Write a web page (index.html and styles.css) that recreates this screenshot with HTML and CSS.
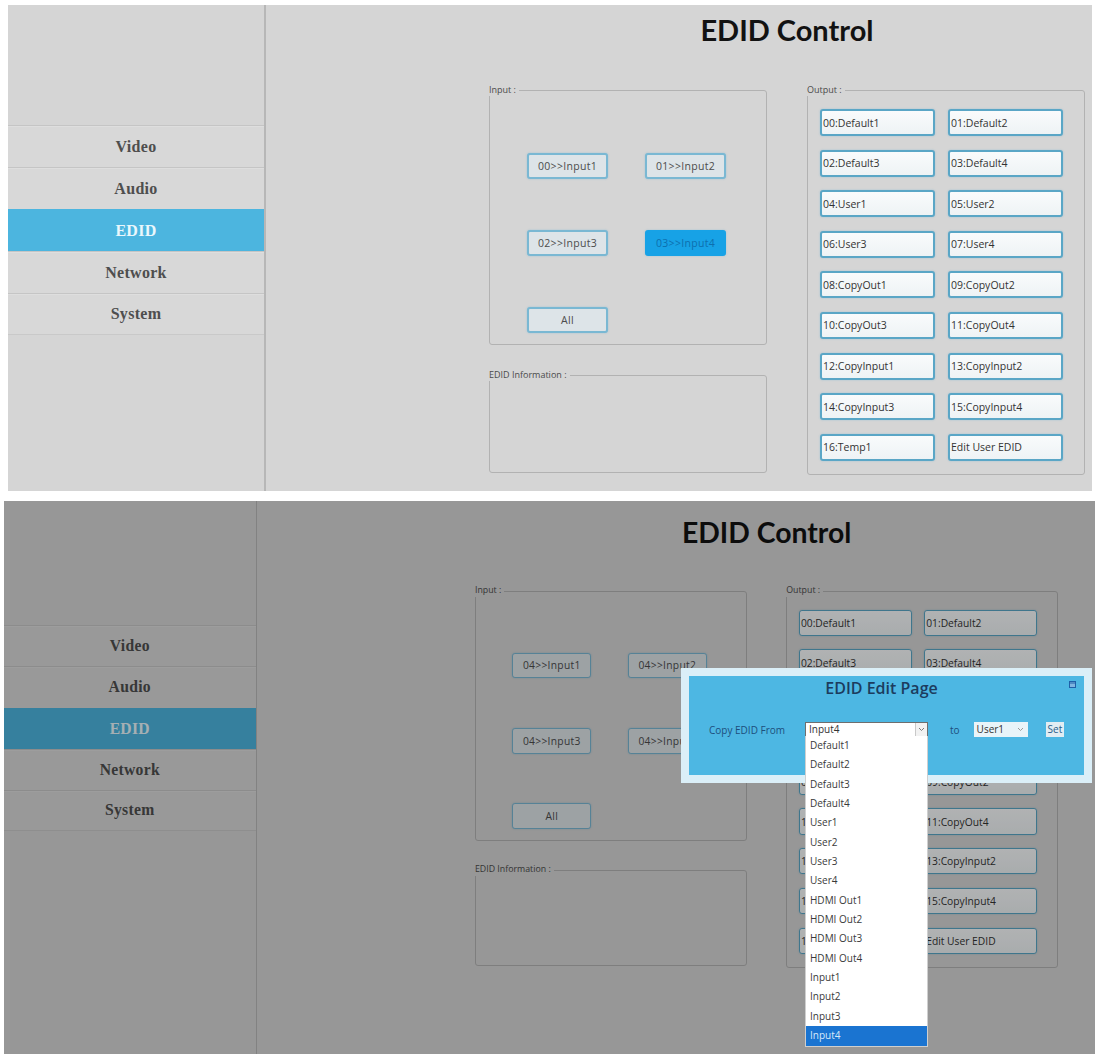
FILE: index.html
```html
<!DOCTYPE html>
<html lang="en">
<head>
<meta charset="utf-8">
<title>EDID Control</title>
<link rel="stylesheet" href="styles.css">
</head>
<body>
<div class="shot shot--top">
  <div class="screen">
    <nav class="sidebar">
      <div class="nav-item">Video</div>
      <div class="nav-item">Audio</div>
      <div class="nav-item is-active">EDID</div>
      <div class="nav-item">Network</div>
      <div class="nav-item">System</div>
    </nav>
    <main class="main">
      <div class="content">
        <h1 class="title">EDID Control</h1>
        <div class="panels">
          <div class="col-left">
            <fieldset class="group">
              <legend>Input :</legend>
              <div class="input-body">
                <div class="btn btn--in">00&gt;&gt;Input1</div>
                <div class="btn btn--in">01&gt;&gt;Input2</div>
                <div class="btn btn--in">02&gt;&gt;Input3</div>
                <div class="btn btn--in is-selected">03&gt;&gt;Input4</div>
                <div class="btn btn--in">All</div>
              </div>
            </fieldset>
            <fieldset class="group">
              <legend>EDID Information :</legend>
              <div class="info-body"></div>
            </fieldset>
          </div>
          <fieldset class="group">
            <legend>Output :</legend>
            <div class="output-body">
              <div class="btn btn--out">00:Default1</div>
              <div class="btn btn--out">01:Default2</div>
              <div class="btn btn--out">02:Default3</div>
              <div class="btn btn--out">03:Default4</div>
              <div class="btn btn--out">04:User1</div>
              <div class="btn btn--out">05:User2</div>
              <div class="btn btn--out">06:User3</div>
              <div class="btn btn--out">07:User4</div>
              <div class="btn btn--out">08:CopyOut1</div>
              <div class="btn btn--out">09:CopyOut2</div>
              <div class="btn btn--out">10:CopyOut3</div>
              <div class="btn btn--out">11:CopyOut4</div>
              <div class="btn btn--out">12:CopyInput1</div>
              <div class="btn btn--out">13:CopyInput2</div>
              <div class="btn btn--out">14:CopyInput3</div>
              <div class="btn btn--out">15:CopyInput4</div>
              <div class="btn btn--out">16:Temp1</div>
              <div class="btn btn--out">Edit User EDID</div>
            </div>
          </fieldset>
        </div>
      </div>
    </main>
  </div>
</div>

<div class="shot shot--modal">
  <div class="screen screen--small">
    <nav class="sidebar">
      <div class="nav-item">Video</div>
      <div class="nav-item">Audio</div>
      <div class="nav-item is-active">EDID</div>
      <div class="nav-item">Network</div>
      <div class="nav-item">System</div>
    </nav>
    <main class="main">
      <div class="content">
        <h1 class="title">EDID Control</h1>
        <div class="panels">
          <div class="col-left">
            <fieldset class="group">
              <legend>Input :</legend>
              <div class="input-body">
                <div class="btn btn--in">04&gt;&gt;Input1</div>
                <div class="btn btn--in">04&gt;&gt;Input2</div>
                <div class="btn btn--in">04&gt;&gt;Input3</div>
                <div class="btn btn--in">04&gt;&gt;Input4</div>
                <div class="btn btn--in">All</div>
              </div>
            </fieldset>
            <fieldset class="group">
              <legend>EDID Information :</legend>
              <div class="info-body"></div>
            </fieldset>
          </div>
          <fieldset class="group">
            <legend>Output :</legend>
            <div class="output-body">
              <div class="btn btn--out">00:Default1</div>
              <div class="btn btn--out">01:Default2</div>
              <div class="btn btn--out">02:Default3</div>
              <div class="btn btn--out">03:Default4</div>
              <div class="btn btn--out">04:User1</div>
              <div class="btn btn--out">05:User2</div>
              <div class="btn btn--out">06:User3</div>
              <div class="btn btn--out">07:User4</div>
              <div class="btn btn--out">08:CopyOut1</div>
              <div class="btn btn--out">09:CopyOut2</div>
              <div class="btn btn--out">10:CopyOut3</div>
              <div class="btn btn--out">11:CopyOut4</div>
              <div class="btn btn--out">12:CopyInput1</div>
              <div class="btn btn--out">13:CopyInput2</div>
              <div class="btn btn--out">14:CopyInput3</div>
              <div class="btn btn--out">15:CopyInput4</div>
              <div class="btn btn--out">16:Temp1</div>
              <div class="btn btn--out">Edit User EDID</div>
            </div>
          </fieldset>
        </div>
      </div>
    </main>
  </div>
  <div class="dim"></div>
  <div class="modal">
    <div class="modal-title">EDID Edit Page</div>
    <svg class="modal-close" width="7" height="7" viewBox="0 0 7 7"><rect x="0.5" y="0.5" width="6" height="6" fill="#7fb4e0" stroke="#1f5fa8" stroke-width="1"/><line x1="1" y1="2" x2="6" y2="2" stroke="#1f5fa8" stroke-width="1"/></svg>
    <div class="modal-row">
      <span class="modal-label">Copy EDID From</span>
      <div class="select select--from">
        <span class="select-value">Input4</span>
        <span class="select-arrow"><svg width="7" height="5" viewBox="0 0 7 5"><path d="M1 1 L3.5 3.5 L6 1" fill="none" stroke="#7a7a7a" stroke-width="1"/></svg></span>
        <ul class="dropdown">
          <li>Default1</li>
          <li>Default2</li>
          <li>Default3</li>
          <li>Default4</li>
          <li>User1</li>
          <li>User2</li>
          <li>User3</li>
          <li>User4</li>
          <li>HDMI Out1</li>
          <li>HDMI Out2</li>
          <li>HDMI Out3</li>
          <li>HDMI Out4</li>
          <li>Input1</li>
          <li>Input2</li>
          <li>Input3</li>
          <li class="is-selected">Input4</li>
        </ul>
      </div>
      <span class="modal-to">to</span>
      <div class="select select--to">
        <span class="select-value">User1</span>
        <span class="select-arrow select-arrow--plain"><svg width="7" height="5" viewBox="0 0 7 5"><path d="M1 1 L3.5 3.5 L6 1" fill="none" stroke="#9a9a9a" stroke-width="1"/></svg></span>
      </div>
      <span class="set-btn">Set</span>
    </div>
  </div>
</div>
</body>
</html>
```

FILE: styles.css
```css
* {
  box-sizing: border-box;
}

html,
body {
  margin: 0;
  padding: 0;
  overflow: hidden;
  background: #ffffff;
}

body {
  width: 1098px;
  height: 1054px;
  font-family: "Open Sans", "Noto Sans", sans-serif;
}

/* ---------- shots ---------- */
.shot--top {
  margin: 5px 0 0 8px;
  width: 1084px;
  height: 486px;
}

.shot--modal {
  position: relative;
  margin: 10px 0 0 4px;
  width: 1091px;
  height: 553px;
  overflow: hidden;
}

/* ---------- screen ---------- */
.screen {
  display: flex;
  width: 1084px;
  height: 486px;
  background: #d5d5d5;
}

.screen--small {
  zoom: 0.979;
  width: 1115px;
  height: 566px;
  --shift: 7px;
}

.sidebar {
  flex: none;
  width: 258px;
  border-right: 2px solid #b7b7b7;
  padding-top: calc(120px + var(--shift, 0px));
}

.nav-item {
  height: 42px;
  display: flex;
  align-items: center;
  justify-content: center;
  font-family: "Liberation Serif", "Times New Roman", serif;
  font-weight: bold;
  font-size: 16px;
  letter-spacing: 0.3px;
  color: #4e4e4e;
  background: #d8d8d8;
  border-top: 1px solid #c5c5c5;
  box-shadow: inset 0 1px 0 #dedede;
}

.nav-item:last-child {
  border-bottom: 1px solid #c9c9c9;
}

.nav-item.is-active {
  background: #4cb5df;
  color: #eaf7fc;
  border-top-color: #4cb5df;
  box-shadow: none;
}

.main {
  flex: 1;
  padding-left: 223px;
  padding-top: calc(7px + var(--shift, 0px));
}

.content {
  width: 596px;
}

.title {
  margin: 0;
  height: 36px;
  line-height: 36px;
  text-align: center;
  font-family: Lato, "Open Sans", sans-serif;
  font-weight: bold;
  font-size: 29px;
  color: #121212;
}

.panels {
  display: flex;
  align-items: flex-start;
  gap: 40px;
  margin-top: 36px;
}

.col-left {
  display: flex;
  flex-direction: column;
  gap: 24px;
}

/* ---------- fieldsets ---------- */
.group {
  width: 278px;
  min-width: 0;
  margin: 0;
  padding: 0;
  border: 1px solid #b2b2b2;
  border-radius: 3px;
}

.group legend {
  margin-left: -1px;
  padding: 0 3px 0 0;
  font-size: 9px;
  line-height: 12px;
  color: #4a4a4a;
}

.input-body {
  height: 248px;
  padding: 57px 0 0 37px;
  display: grid;
  grid-template-columns: 81px 81px;
  grid-auto-rows: 26px;
  column-gap: 37px;
  row-gap: 51px;
}

.info-body {
  height: 91px;
}

.output-body {
  height: 378px;
  padding: 13px 0 0 12px;
  display: grid;
  grid-template-columns: 115px 115px;
  grid-auto-rows: 27px;
  column-gap: 13px;
  row-gap: 13.6px;
}

/* ---------- buttons ---------- */
.btn {
  display: flex;
  align-items: center;
  white-space: nowrap;
  border: 2px solid #7ab8d3;
  border-radius: 3px;
  box-shadow: 0 0 2px rgba(90, 170, 210, 0.45);
}

.btn--in {
  justify-content: center;
  font-size: 10.5px;
  letter-spacing: 0.3px;
  color: #4c4c4c;
  background: #dde4e8;
}

.btn--out {
  padding-left: 1px;
  font-size: 10.5px;
  color: #333333;
  border-color: #5aa6c6;
  background: linear-gradient(#f9fbfc, #eef3f5);
}

.btn.is-selected {
  background: #17a2e6;
  border-color: #17a2e6;
  color: #0d6fae;
}

/* ---------- dim + modal ---------- */
.dim {
  position: absolute;
  inset: 0;
  background: rgba(0, 0, 0, 0.29);
}

.modal {
  position: absolute;
  left: 677px;
  top: 167px;
  width: 411px;
  height: 115px;
  border: 8px solid #dbeff8;
  background: #4db7e3;
}

.modal-title {
  padding-top: 1px;
  height: 23px;
  line-height: 22px;
  text-align: center;
  font-size: 16px;
  font-weight: 600;
  color: #1c3c5e;
  padding-right: 10px;
}

.modal-close {
  position: absolute;
  top: 5px;
  right: 8px;
}

.modal-row {
  display: flex;
  align-items: center;
  height: 15px;
  margin-top: 23px;
  padding-left: 20px;
  font-size: 10px;
}

.modal-label {
  width: 96px;
  flex: none;
  color: #1d4f7d;
}

.select {
  position: relative;
  display: flex;
  align-items: center;
  height: 15px;
  flex: none;
  background: #ffffff;
  color: #333333;
}

.select--from {
  width: 123px;
  border: 1px solid #6e6e6e;
}

.select--to {
  width: 54px;
  background: #e9f4f9;
}

.select-value {
  flex: 1;
  padding-left: 3px;
  line-height: 13px;
}

.select-arrow {
  width: 12px;
  height: 13px;
  display: flex;
  align-items: center;
  justify-content: center;
  border-left: 1px solid #c9c9c9;
  background: #f2f2f2;
}

.select-arrow--plain {
  border-left: none;
  background: transparent;
  width: 14px;
}

.modal-to {
  margin: 0 14px 0 22px;
  color: #1d4f7d;
}

.set-btn {
  margin-left: 18px;
  height: 15px;
  line-height: 15px;
  padding: 0 2px;
  background: #e2edf3;
  color: #2a5d8a;
}

.dropdown {
  position: absolute;
  top: 100%;
  left: -1px;
  width: 123px;
  margin: 0;
  padding: 0;
  list-style: none;
  background: #ffffff;
  border: 1px solid #cfcfcf;
  border-top: none;
}

.dropdown li {
  height: 19.35px;
  line-height: 19.35px;
  padding-left: 4px;
  font-size: 10px;
  color: #3a3a3a;
}

.dropdown li.is-selected {
  background: #1a74d1;
  color: #d8e9f9;
}
```
